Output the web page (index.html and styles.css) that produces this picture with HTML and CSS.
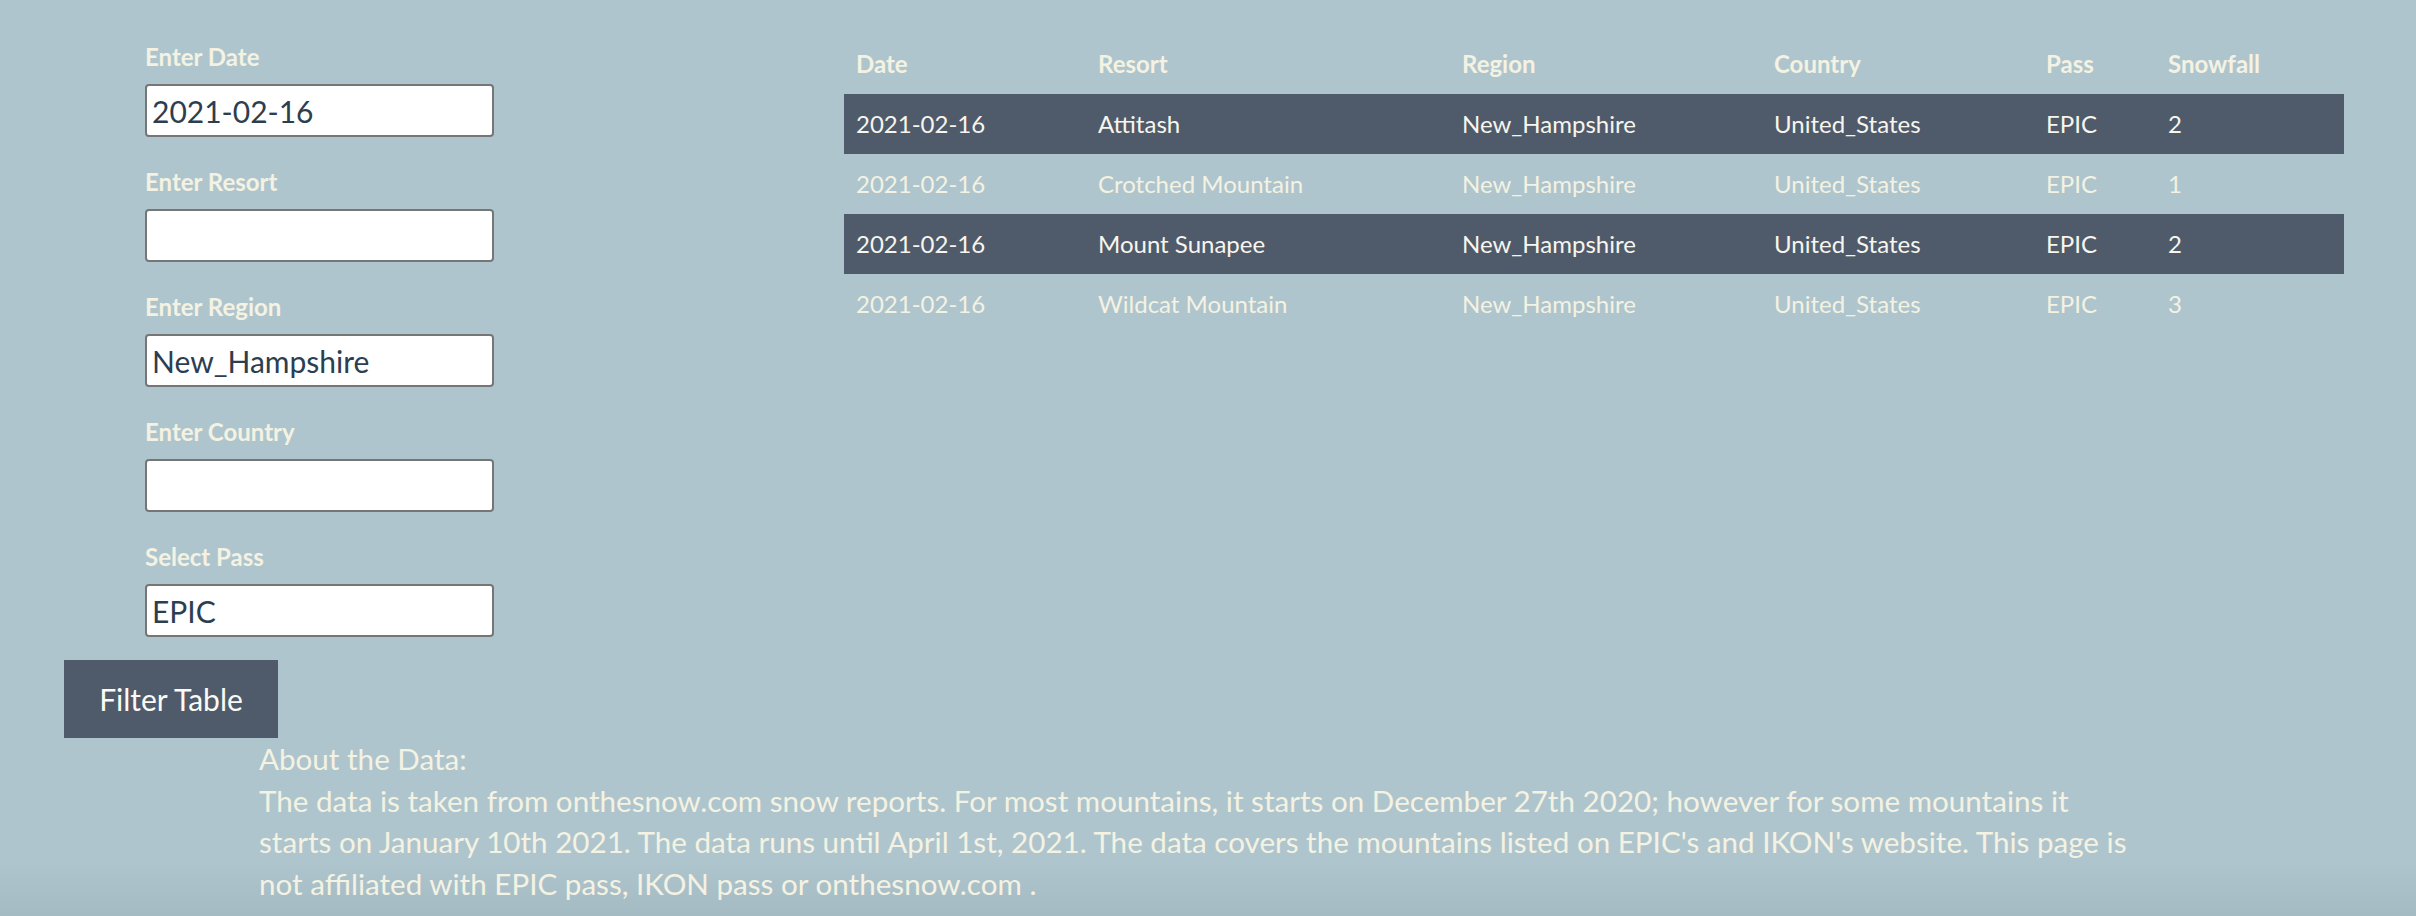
FILE: index.html
```html
<!DOCTYPE html>
<html lang="en">
<head>
<meta charset="utf-8">
<title>Snowfall Table</title>
<link rel="stylesheet" href="styles.css">
</head>
<body>
<div class="top">
  <form class="sidebar">
    <div class="fields">
      <label class="field-label" for="date">Enter Date</label>
      <input class="field-input" id="date" type="text" value="2021-02-16">
      <label class="field-label" for="resort">Enter Resort</label>
      <input class="field-input" id="resort" type="text" value="">
      <label class="field-label" for="region">Enter Region</label>
      <input class="field-input" id="region" type="text" value="New_Hampshire">
      <label class="field-label" for="country">Enter Country</label>
      <input class="field-input" id="country" type="text" value="">
      <label class="field-label" for="pass">Select Pass</label>
      <input class="field-input" id="pass" type="text" value="EPIC">
    </div>
    <button class="filter-btn" type="button">Filter Table</button>
  </form>
  <div class="table-wrap">
    <table class="snow-table">
      <colgroup>
        <col class="c-date"><col class="c-resort"><col class="c-region"><col class="c-country"><col class="c-pass"><col class="c-snow">
      </colgroup>
      <thead>
        <tr><th>Date</th><th>Resort</th><th>Region</th><th>Country</th><th>Pass</th><th>Snowfall</th></tr>
      </thead>
      <tbody>
        <tr class="row-dark"><td>2021-02-16</td><td>Attitash</td><td>New_Hampshire</td><td>United_States</td><td>EPIC</td><td>2</td></tr>
        <tr class="row-light"><td>2021-02-16</td><td>Crotched Mountain</td><td>New_Hampshire</td><td>United_States</td><td>EPIC</td><td>1</td></tr>
        <tr class="row-dark"><td>2021-02-16</td><td>Mount Sunapee</td><td>New_Hampshire</td><td>United_States</td><td>EPIC</td><td>2</td></tr>
        <tr class="row-light"><td>2021-02-16</td><td>Wildcat Mountain</td><td>New_Hampshire</td><td>United_States</td><td>EPIC</td><td>3</td></tr>
      </tbody>
    </table>
  </div>
</div>
<div class="about">
  <p class="about-text">About the Data:<br>The data is taken from onthesnow.com snow reports. For most mountains, it starts on December 27th 2020; however for some mountains it starts on January 10th 2021. The data runs until April 1st, 2021. The data covers the mountains listed on EPIC's and IKON's website. This page is not affiliated with EPIC pass, IKON pass or onthesnow.com .</p>
</div>
</body>
</html>
```

FILE: styles.css
```css
html {
  background: #afc5cd;
}
body {
  margin: 0;
  min-height: 100vh;
  font-family: Lato, "Noto Sans", sans-serif;
  color: #f4f2e2;
  background: linear-gradient(to bottom, #afc5cd 0, #afc5cd calc(100% - 56px), #a5bbc4 100%);
}
.top {
  display: flex;
  align-items: flex-start;
}
.sidebar {
  width: 844px;
  flex: none;
  box-sizing: border-box;
  padding: 42px 0 0 64px;
  margin: 0;
}
.fields {
  padding-left: 81px;
  display: flex;
  flex-direction: column;
  align-items: flex-start;
}
.field-label {
  display: block;
  font-size: 24px;
  font-weight: 700;
  line-height: 29px;
  color: #f4f2e2;
  margin-bottom: 13px;
}
.field-input {
  box-sizing: border-box;
  width: 349px;
  height: 53px;
  border: 2px solid #767676;
  border-radius: 4px;
  background: #fff;
  padding: 0 5px;
  font-family: Lato, sans-serif;
  font-size: 30px;
  color: #2c3e50;
  margin: 0 0 30px 0;
}
.field-input:last-child {
  margin-bottom: 23px;
}
.filter-btn {
  display: block;
  width: 214px;
  height: 78px;
  border: none;
  background: #4f5b6b;
  color: #fbfaf4;
  font-family: Lato, sans-serif;
  font-size: 30px;
  padding: 0;
  margin: 0;
}
.table-wrap {
  padding-top: 34px;
}
.snow-table {
  width: 1500px;
  border-collapse: collapse;
  table-layout: fixed;
  font-size: 24px;
}
.c-date { width: 242px; }
.c-resort { width: 364px; }
.c-region { width: 312px; }
.c-country { width: 272px; }
.c-pass { width: 122px; }
.c-snow { width: 188px; }
.snow-table th,
.snow-table td {
  text-align: left;
  padding: 15px 12px;
  line-height: 30px;
  white-space: nowrap;
}
.snow-table th {
  font-weight: 700;
  color: #f4f2e2;
}
.row-dark {
  background: #4f5b6b;
  color: #f7f5ec;
}
.row-light {
  color: #f4f2e2;
}
.about {
  padding-left: 259px;
}
.about-text {
  margin: 0;
  width: 1880px;
  font-size: 29.6px;
  line-height: 41.6px;
  color: #f4f2e2;
}
```
